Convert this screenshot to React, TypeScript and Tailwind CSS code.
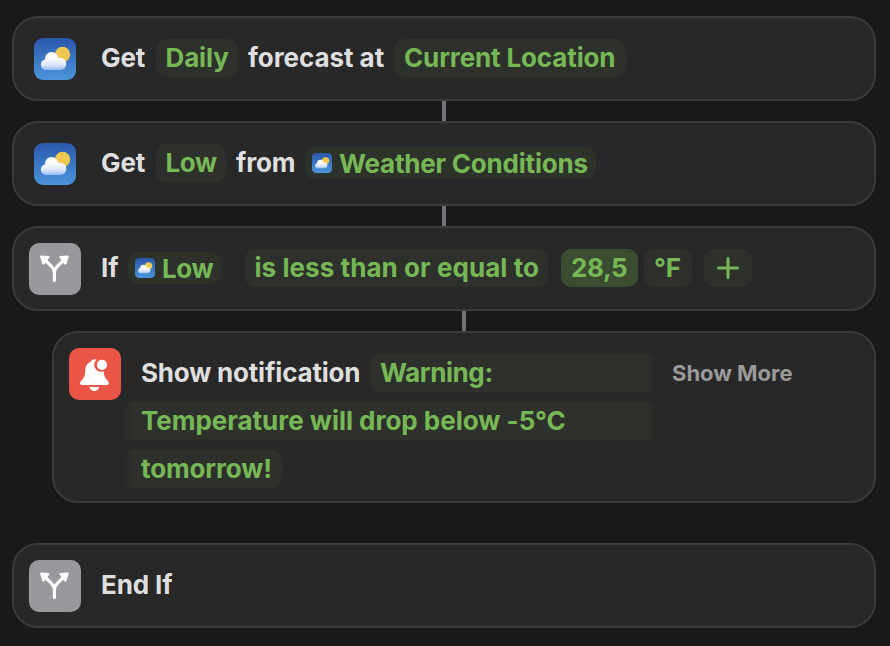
import type { ReactNode } from "react";

function Card({ children, className = "h-[85px]" }: { children: ReactNode; className?: string }) {
  return (
    <div className={`flex shrink-0 rounded-[26px] border-2 border-[#3b3b3b] bg-[#282828] ${className}`}>
      {children}
    </div>
  );
}

function Connector({ className }: { className: string }) {
  return <div className={`h-5 w-1 shrink-0 bg-[#727177] ${className}`} />;
}

function WeatherIcon({ id, className }: { id: string; className: string }) {
  return (
    <svg viewBox="0 0 42 42" className={`shrink-0 ${className}`}>
      <defs>
        <linearGradient id={`${id}-sky`} x1="0" y1="0" x2="0" y2="1">
          <stop offset="0" stopColor="#2a57ab" />
          <stop offset="1" stopColor="#4b95dc" />
        </linearGradient>
        <linearGradient id={`${id}-cloud`} gradientUnits="userSpaceOnUse" x1="0" y1="14" x2="0" y2="32">
          <stop offset="0.35" stopColor="#fbfcfe" />
          <stop offset="0.7" stopColor="#dfe9fb" />
          <stop offset="1" stopColor="#98bdf3" />
        </linearGradient>
      </defs>
      <rect width="42" height="42" rx="9" fill={`url(#${id}-sky)`} />
      <circle cx="28.5" cy="16.5" r="7.7" fill="#efc850" />
      <g fill={`url(#${id}-cloud)`}>
        <circle cx="12.2" cy="26.6" r="5.4" />
        <circle cx="17.6" cy="20.7" r="6.7" />
        <circle cx="26.2" cy="25.9" r="6.1" />
        <rect x="12.2" y="22" width="14" height="10" />
      </g>
    </svg>
  );
}

function BranchIcon() {
  return (
    <div className="ml-[15px] mt-[15px] size-[52px] shrink-0 rounded-[10px] bg-[#99989d]">
      <svg viewBox="0 0 52 52" className="size-[52px]" fill="none" stroke="#fff">
        <path
          d="M25.4 37.4V29.5C25.4 26.5 24.2 25 22.5 23.3L15.5 16.5M25.4 29.5C25.4 26.5 26.6 25 28.3 23.3L35.3 16.5"
          strokeWidth="3.2"
          strokeLinecap="round"
        />
        <path
          d="M12.2 13.6L19.3 14.2L14.4 20.6ZM38.6 13.6L31.5 14.2L36.4 20.6Z"
          fill="#fff"
          strokeWidth="2.2"
          strokeLinejoin="round"
        />
      </svg>
    </div>
  );
}

function BellIcon() {
  return (
    <div className="ml-[15px] mt-[15px] size-[52px] shrink-0 rounded-[10px] bg-[#eb5546]">
      <svg viewBox="0 0 52 52" className="size-[52px]" fill="#fff">
        <path d="M25.5 11.3c1 0 1.6.2 2.1.5a6.8 6.8 0 0 0 5.6 11.8l1.5-.1c.3 4.5 1.5 6.5 3.500 8.700 1.100 1.200 1.700 1.900 1.700 2.800 0 1.200-.9 2-2.200 2H13.200c-1.300 0-2.200-.8-2.200-2 0-.9.6-1.600 1.700-2.800 2.400-2.600 3.300-4.700 3.500-9.300.2-4.600 1.800-7.800 5.300-8.900.8-1.800 2.300-2.700 4-2.700Z" />
        <circle cx="33" cy="16.9" r="5.1" />
        <path d="M20.5 39h9.600c-.4 2.400-2.400 4-4.800 4s-4.400-1.600-4.800-4Z" />
      </svg>
    </div>
  );
}

function Label({ children, className }: { children: ReactNode; className: string }) {
  return <span className={`h-[38px] shrink-0 text-[#dfdfdf] ${className}`}>{children}</span>;
}

function Chip({
  children,
  className,
  tone = "bg-[#2e312b]",
}: {
  children: ReactNode;
  className: string;
  tone?: string;
}) {
  return (
    <span className={`flex h-[38px] shrink-0 rounded-[10px] text-[#77b856] ${tone} ${className}`}>
      {children}
    </span>
  );
}

function VariableChip({ id, children, className }: { id: string; children: ReactNode; className: string }) {
  return (
    <span
      className={`mt-[3px] flex h-8 shrink-0 items-center rounded-[10px] bg-[#2d322b] pl-[7px] leading-8 text-[#77b856] ${className}`}
    >
      <WeatherIcon id={id} className="mr-[7px] mb-px size-5" />
      <span className="pt-0.5">{children}</span>
    </span>
  );
}

export default function App() {
  return (
    <main className="flex h-[646px] w-[890px] flex-col overflow-hidden bg-[#191919] pl-3 pr-[14px] pt-4 font-['Inter',sans-serif] text-[26px] font-[650] leading-[38px] tracking-[-0.13px] whitespace-nowrap">
      <Card>
        <WeatherIcon id="w1" className="ml-5 mt-5 size-[42px]" />
        <div className="ml-[25px] mt-[21px] flex">
          <Label className="w-[55px]">Get</Label>
          <Chip className="w-[82px] pl-[9.5px]">Daily</Chip>
          <Label className="ml-[10px] w-[146px] tracking-[-0.05px]">forecast at</Label>
          <Chip className="w-[232px] pl-[10px]">Current Location</Chip>
        </div>
      </Card>
      <Connector className="ml-[430px]" />
      <Card>
        <WeatherIcon id="w2" className="ml-5 mt-5 size-[42px]" />
        <div className="ml-[25px] mt-[21px] flex">
          <Label className="w-[55px]">Get</Label>
          <Chip className="w-[70px] pl-[9.5px] tracking-[-0.4px]">Low</Chip>
          <Label className="ml-[10px] w-[69px]">from</Label>
          <VariableChip id="w3" className="w-[291px] tracking-[-0.21px]">Weather Conditions</VariableChip>
        </div>
      </Card>
      <Connector className="ml-[430px]" />
      <Card>
        <BranchIcon />
        <div className="ml-5 mt-[21px] flex">
          <Label className="w-[27px]">If</Label>
          <VariableChip id="w4" className="w-[93px] tracking-[-0.4px]">Low</VariableChip>
          <Chip className="ml-[24px] w-[303px] pl-[9.5px] tracking-[0.06px]">is less than or equal to</Chip>
          <Chip tone="bg-[#3b4c30]" className="ml-[13px] w-[77px] pl-[10px] tracking-[-0.4px]">28,5</Chip>
          <Chip className="ml-[6px] w-[48px] pl-[10px]">°F</Chip>
          <Chip className="ml-3 w-[48px] items-center justify-center">
            <svg viewBox="0 0 22 22" className="size-[22px]" stroke="currentColor" strokeWidth="3" strokeLinecap="round">
              <path d="M11 1.5V20.5M1.5 11H20.5" />
            </svg>
          </Chip>
        </div>
      </Card>
      <Connector className="ml-[450px]" />
      <Card className="ml-10 h-[172px]">
        <BellIcon />
        <div className="mt-[21px] flex w-[540px] shrink-0 flex-col gap-[10px]">
          <div className="flex">
            <Label className="ml-5 w-[229px] tracking-[-0.2px]">Show notification</Label>
            <Chip
              tone="bg-linear-to-r from-[#2e312b] from-94% to-[#282828]"
              className="w-[290px] rounded-r-none pl-[10px] tracking-[-0.4px]"
            >
              Warning:
            </Chip>
          </div>
          <Chip
            tone="bg-linear-to-r from-[#282828] via-[#2e312b] via-[2.5%] to-[#2e312b] to-[100%]"
            className="w-[540px] rounded-none"
          >
            <span className="w-[522px] pl-5 tracking-[-0.02px]">Temperature will drop below -5°C</span>
            <span className="w-[18px] bg-linear-to-r from-[#2e312b] to-[#282828]" />
          </Chip>
          <Chip
            tone="bg-linear-to-r from-[#282828] to-[#2e312b] to-[9%]"
            className="w-[161px] rounded-l-none pl-5"
          >
            tomorrow!
          </Chip>
        </div>
        <span className="ml-[11px] mt-[21px] text-[22px] tracking-[-0.03px] text-[#9a9a9a]">Show More</span>
      </Card>
      <Card className="mt-10 h-[85px]">
        <BranchIcon />
        <Label className="ml-5 mt-[21px]">End If</Label>
      </Card>
    </main>
  );
}
